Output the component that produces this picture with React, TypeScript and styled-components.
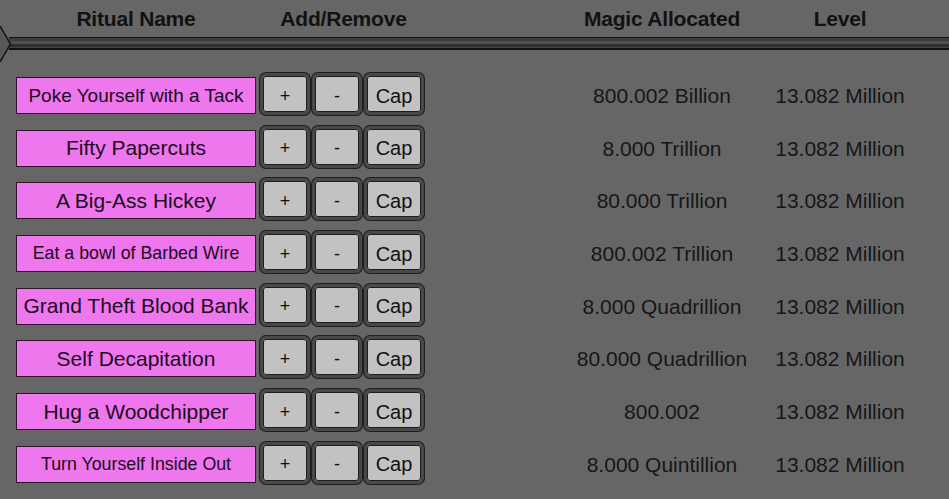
import React from "react";
import styled, { createGlobalStyle } from "styled-components";

const GlobalStyle = createGlobalStyle`
  html, body {
    margin: 0;
    padding: 0;
    background: #666666;
  }
  body {
    font-family: "Liberation Sans", Arial, sans-serif;
    color: #141414;
  }
`;

const COLUMNS = "240px 169px 147px 180px 176px";

const Page = styled.div`
  width: 949px;
  height: 499px;
  overflow: hidden;
  background: #666666;
`;

const HeaderRow = styled.div`
  display: grid;
  grid-template-columns: ${COLUMNS};
  padding-left: 16px;
  height: 37px;
  align-items: center;
`;

const HeaderCell = styled.div<{ $shift?: number }>`
  text-align: center;
  font-weight: bold;
  font-size: 21px;
  letter-spacing: -0.2px;
  color: #111;
  padding-left: ${(p) => p.$shift ?? 0}px;
`;

const Divider = styled.div`
  display: flex;
  align-items: center;
  height: 13px;
`;

const Tip = styled.svg`
  flex: none;
  width: 12px;
  height: 36px;
  margin: -12px 0;
  position: relative;
  z-index: 1;
`;

const Stripe = styled.div`
  flex: 1;
  height: 13px;
  margin-left: -3px;
  background: linear-gradient(
    to bottom,
    #111 0px,
    #111 1px,
    #3d3d3d 1px,
    #3d3d3d 4px,
    #505050 4px,
    #505050 7px,
    #2f2f2f 7px,
    #2f2f2f 10px,
    #454545 10px,
    #454545 11px,
    #111 11px,
    #111 13px
  );
`;

const List = styled.div`
  display: flex;
  flex-direction: column;
  gap: 10.7px;
  padding-top: 23px;
`;

const Row = styled.div`
  display: grid;
  grid-template-columns: ${COLUMNS};
  padding-left: 16px;
  height: 42px;
  align-items: center;
`;

const NameBox = styled.div<{ $size: number }>`
  box-sizing: border-box;
  height: 37px;
  margin-top: 3px;
  background: #ee77ee;
  border: 1px solid #2e122e;
  display: flex;
  align-items: center;
  justify-content: center;
  font-size: ${(p) => p.$size}px;
  color: #1c0a1c;
  white-space: nowrap;
`;

const Controls = styled.div`
  display: flex;
  gap: 2px;
  padding-left: 4px;
  height: 42px;
`;

const KeyButton = styled.button<{ $wide?: boolean }>`
  box-sizing: border-box;
  width: ${(p) => (p.$wide ? 60 : 50)}px;
  height: 42px;
  padding: 4px 0 0;
  border: 3px solid #484848;
  border-radius: 6px;
  background: #c2c2c2;
  box-shadow: 0 0 0 1px #1e1e1e, inset 0 0 0 1px #1e1e1e;
  font-family: "Liberation Sans", Arial, sans-serif;
  font-size: ${(p) => (p.$wide ? 20 : 18)}px;
  color: #111;
  cursor: pointer;
`;

const Value = styled.div`
  margin-top: 4px;
  text-align: center;
  font-size: 21px;
  color: #161616;
  white-space: nowrap;
`;

type Ritual = { name: string; size: number; magic: string };

const rituals: Ritual[] = [
  { name: "Poke Yourself with a Tack", size: 19, magic: "800.002 Billion" },
  { name: "Fifty Papercuts", size: 21, magic: "8.000 Trillion" },
  { name: "A Big-Ass Hickey", size: 21, magic: "80.000 Trillion" },
  { name: "Eat a bowl of Barbed Wire", size: 17.8, magic: "800.002 Trillion" },
  { name: "Grand Theft Blood Bank", size: 21, magic: "8.000 Quadrillion" },
  { name: "Self Decapitation", size: 21, magic: "80.000 Quadrillion" },
  { name: "Hug a Woodchipper", size: 21, magic: "800.002" },
  { name: "Turn Yourself Inside Out", size: 17.8, magic: "8.000 Quintillion" },
];

export default function App() {
  return (
    <Page>
      <GlobalStyle />
      <HeaderRow>
        <HeaderCell>Ritual Name</HeaderCell>
        <HeaderCell $shift={6}>Add/Remove</HeaderCell>
        <div />
        <HeaderCell>Magic Allocated</HeaderCell>
        <HeaderCell>Level</HeaderCell>
      </HeaderRow>
      <Divider>
        <Tip viewBox="0 0 12 36">
          <polygon points="-10,0 0,0 10.5,18 0,36 -10,36" fill="#585858" stroke="#161616" strokeWidth="1.5" />
        </Tip>
        <Stripe />
      </Divider>
      <List>
        {rituals.map((r) => (
          <Row key={r.name}>
            <NameBox $size={r.size}>{r.name}</NameBox>
            <Controls>
              <KeyButton>+</KeyButton>
              <KeyButton>-</KeyButton>
              <KeyButton $wide>Cap</KeyButton>
            </Controls>
            <div />
            <Value>{r.magic}</Value>
            <Value>13.082 Million</Value>
          </Row>
        ))}
      </List>
    </Page>
  );
}
